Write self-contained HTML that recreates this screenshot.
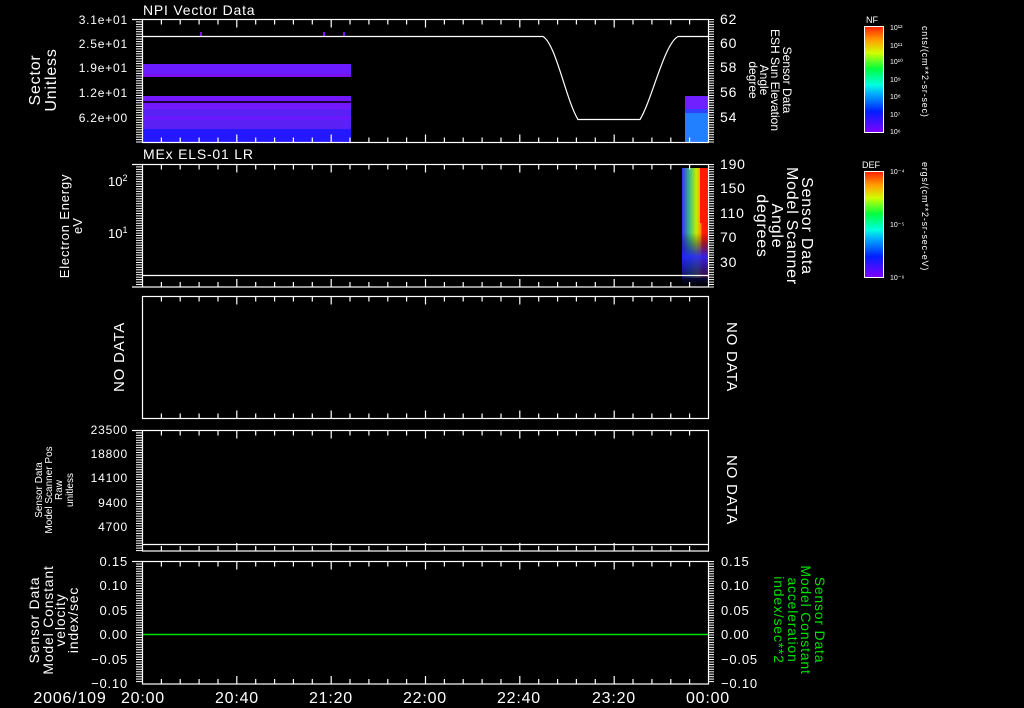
<!DOCTYPE html>
<html><head><meta charset="utf-8"><style>
html,body{margin:0;padding:0;background:#000;}
svg{display:block}
text{font-family:"Liberation Sans",sans-serif;fill:#fff;}
.n{letter-spacing:0.8px}
</style></head><body>
<svg id="s" width="1024" height="708" viewBox="0 0 1024 708" xmlns="http://www.w3.org/2000/svg">
<defs>
<linearGradient id="rb" x1="0" y1="1" x2="0" y2="0">
<stop offset="0" stop-color="#8000ff"/><stop offset="0.2" stop-color="#0020ff"/><stop offset="0.35" stop-color="#00a0ff"/><stop offset="0.45" stop-color="#00ffe0"/><stop offset="0.6" stop-color="#00ff40"/><stop offset="0.75" stop-color="#d0ff00"/><stop offset="0.87" stop-color="#ffa000"/><stop offset="1" stop-color="#ff2000"/>
</linearGradient>
<linearGradient id="sp" x1="0" y1="0" x2="1" y2="0">
<stop offset="0" stop-color="#3030ff"/><stop offset="0.3" stop-color="#40c080"/><stop offset="0.55" stop-color="#c0f000"/><stop offset="0.7" stop-color="#ffa000"/><stop offset="0.78" stop-color="#ff2000"/><stop offset="1" stop-color="#ff1000"/>
</linearGradient>
<linearGradient id="spv" x1="0" y1="0" x2="0" y2="1">
<stop offset="0" stop-color="#000" stop-opacity="0"/><stop offset="0.55" stop-color="#000" stop-opacity="0"/><stop offset="0.75" stop-color="#2020ff" stop-opacity="0.9"/><stop offset="1" stop-color="#000" stop-opacity="0.8"/>
</linearGradient>
</defs>
<g id="data">
<rect x="142" y="64" width="209" height="13" fill="#6a1cff"/>
<rect x="142" y="74" width="209" height="3" fill="#7a10f0"/>
<rect x="142" y="96" width="209" height="13" fill="#7418ff"/>
<rect x="142" y="101" width="209" height="2" fill="#200040"/>
<rect x="142" y="109" width="209" height="20" fill="#5a20f4"/>
<rect x="142" y="116" width="209" height="4" fill="#6a18ff"/>
<rect x="142" y="129" width="209" height="13" fill="#2418ff"/>
<rect x="200" y="32" width="2" height="4" fill="#7a10ff"/>
<rect x="323" y="32" width="2" height="4" fill="#7a10ff"/>
<rect x="343" y="32" width="2" height="4" fill="#7a10ff"/>
<rect x="685" y="96" width="23" height="13" fill="#7020ff"/>
<rect x="685" y="109" width="23" height="4" fill="#3040ff"/>
<rect x="685" y="113" width="23" height="29" fill="#2080ff"/>
<rect x="682" y="168" width="26" height="110" fill="url(#sp)"/>
<rect x="682" y="168" width="26" height="118" fill="url(#spv)"/>
<rect x="700" y="168" width="6" height="55" fill="#ff1a00"/>
<line x1="142" y1="634.5" x2="708" y2="634.5" stroke="#00e000" stroke-width="1.5"/>
<path d="M142 36.5 H543 C556 44 566 100 578 119.5 H640 C652 100 664 44 678 36.5 H708" fill="none" stroke="#fff" stroke-width="1.2"/>
<line x1="142" y1="275.5" x2="708" y2="275.5" stroke="#fff" stroke-width="1.2"/>
<line x1="142" y1="544.5" x2="708" y2="544.5" stroke="#fff" stroke-width="1.2"/>
</g>
<g id="frames" fill="none" stroke="#fff" stroke-width="1.2"></g>
<rect x="864.5" y="26.5" width="19" height="106" fill="url(#rb)" stroke="#fff"/>
<rect x="864.5" y="171.5" width="19" height="106" fill="url(#rb)" stroke="#fff"/>
<text x="866" y="23" font-size="9">NF</text>
<text x="862" y="168" font-size="9">DEF</text>
<g font-size="7">
<text x="890" y="30">10¹²</text><text x="890" y="48">10¹¹</text><text x="890" y="64">10¹⁰</text><text x="890" y="82">10⁹</text><text x="890" y="99">10⁸</text><text x="890" y="117">10⁷</text><text x="890" y="134">10⁶</text>
<text x="890" y="174">10⁻⁴</text><text x="890" y="227">10⁻⁵</text><text x="890" y="280">10⁻⁶</text>
</g>
<text font-size="9" class="n" transform="translate(922,26) rotate(90)">cnts/(cm**2-sr-sec)</text>
<text font-size="9" class="n" transform="translate(922,162) rotate(90)">ergs/(cm**2-sr-sec-eV)</text>
<text x="143" y="15" font-size="14" class="n">NPI Vector Data</text>
<text x="143" y="159" font-size="14" class="n">MEx ELS-01 LR</text>
<g font-size="12" text-anchor="end" class="n">
<text x="128" y="24">3.1e+01</text><text x="128" y="48">2.5e+01</text><text x="128" y="72">1.9e+01</text><text x="128" y="97">1.2e+01</text><text x="128" y="122">6.2e+00</text>
</g>
<text font-size="16" text-anchor="middle" class="n" transform="translate(40,80) rotate(-90)">Sector</text>
<text font-size="16" text-anchor="middle" class="n" transform="translate(56,80) rotate(-90)">Unitless</text>
<g font-size="14" class="n">
<text x="720" y="24">62</text><text x="720" y="48">60</text><text x="720" y="72">58</text><text x="720" y="97">56</text><text x="720" y="122">54</text>
</g>
<g font-size="12" text-anchor="middle">
<text transform="translate(783,80) rotate(90)">Sensor Data</text>
<text transform="translate(771,80) rotate(90)">ESH Sun Elevation</text>
<text transform="translate(760,80) rotate(90)">Angle</text>
<text transform="translate(749,80) rotate(90)">degree</text>
</g>
<text x="108" y="186" font-size="13">10<tspan font-size="9" dy="-5">2</tspan></text>
<text x="108" y="238" font-size="13">10<tspan font-size="9" dy="-5">1</tspan></text>
<text font-size="13" text-anchor="middle" class="n" transform="translate(69,226) rotate(-90)">Electron Energy</text>
<text font-size="13" text-anchor="middle" transform="translate(82,226) rotate(-90)">eV</text>
<g font-size="14" class="n">
<text x="720" y="169">190</text><text x="720" y="193">150</text><text x="720" y="218">110</text><text x="720" y="242">70</text><text x="720" y="267">30</text>
</g>
<g font-size="16" text-anchor="middle" class="n">
<text transform="translate(802,226) rotate(90)">Sensor Data</text>
<text transform="translate(787,226) rotate(90)">Model Scanner</text>
<text transform="translate(772,226) rotate(90)">Angle</text>
<text transform="translate(757,226) rotate(90)">degrees</text>
</g>
<text font-size="15" text-anchor="middle" class="n" transform="translate(124,357) rotate(-90)">NO DATA</text>
<text font-size="15" text-anchor="middle" class="n" transform="translate(727,357) rotate(90)">NO DATA</text>
<g font-size="12" text-anchor="end" class="n">
<text x="128" y="434">23500</text><text x="128" y="458">18800</text><text x="128" y="482">14100</text><text x="128" y="507">9400</text><text x="128" y="531">4700</text>
</g>
<g font-size="10" text-anchor="middle">
<text transform="translate(42,490) rotate(-90)">Sensor Data</text>
<text transform="translate(52,490) rotate(-90)">Model Scanner Pos</text>
<text transform="translate(62,490) rotate(-90)">Raw</text>
<text transform="translate(73,490) rotate(-90)">unitless</text>
</g>
<text font-size="15" text-anchor="middle" class="n" transform="translate(727,490) rotate(90)">NO DATA</text>
<g font-size="13" text-anchor="end" class="n">
<text x="128" y="566">0.15</text><text x="128" y="590">0.10</text><text x="128" y="615">0.05</text><text x="128" y="639">0.00</text><text x="128" y="664">−0.05</text><text x="128" y="688">−0.10</text>
</g>
<g font-size="13" class="n">
<text x="721" y="566">0.15</text><text x="721" y="590">0.10</text><text x="721" y="615">0.05</text><text x="721" y="639">0.00</text><text x="721" y="664">−0.05</text><text x="721" y="688">−0.10</text>
</g>
<g font-size="14" text-anchor="middle" class="n">
<text transform="translate(39,620) rotate(-90)">Sensor Data</text>
<text transform="translate(53,620) rotate(-90)">Model Constant</text>
<text transform="translate(65,620) rotate(-90)">velocity</text>
<text transform="translate(78,620) rotate(-90)">index/sec</text>
</g>
<g font-size="14" text-anchor="middle" class="n">
<text style="fill:#00e000" transform="translate(815,620) rotate(90)">Sensor Data</text>
<text style="fill:#00e000" transform="translate(801,620) rotate(90)">Model Constant</text>
<text style="fill:#00e000" transform="translate(788,620) rotate(90)">acceleration</text>
<text style="fill:#00e000" transform="translate(774,620) rotate(90)">index/sec**2</text>
</g>
<g font-size="16" text-anchor="middle" class="n">
<text x="70" y="703">2006/109</text>
<text x="143" y="703">20:00</text><text x="237" y="703">20:40</text><text x="331" y="703">21:20</text><text x="425" y="703">22:00</text><text x="519" y="703">22:40</text><text x="614" y="703">23:20</text><text x="708" y="703">00:00</text>
</g>
</svg>
<script>
(function(){
var g=document.getElementById('frames');var h='';
var L=142.5,R=708.5;
var P=[[19.5,142.5,1,1],[164.5,287,1,1],[296.5,418.5,0,0],[430.5,551,1,0],[561.5,684,1,1]];
P.forEach(function(p,i){
 var t=p[0],b=p[1];
 h+='<rect x="'+L+'" y="'+t+'" width="'+(R-L)+'" height="'+(b-t)+'"/>';
 for(var k=1;k<30;k++){var x=(L+k*(R-L)/30).toFixed(1);var len=(k%5==0)?8:5;
  h+='<line x1="'+x+'" y1="'+t+'" x2="'+x+'" y2="'+(t+len)+'"/><line x1="'+x+'" y1="'+b+'" x2="'+x+'" y2="'+(b-len)+'"/>';}
 if(p[2]){for(var y=t;y<=b;y+=2.45){h+='<line x1="136" y1="'+y.toFixed(1)+'" x2="'+L+'" y2="'+y.toFixed(1)+'" stroke-width="1"/>';}
  h+='<line x1="132" y1="'+t+'" x2="'+L+'" y2="'+t+'"/>';}
 if(p[3]){for(var y=t;y<=b;y+=2.45){h+='<line x1="'+R+'" y1="'+y.toFixed(1)+'" x2="714" y2="'+y.toFixed(1)+'" stroke-width="1"/>';}}
});
h+='<line x1="132" y1="287" x2="142" y2="287"/>';
g.innerHTML=h;
})();
</script>
</body></html>
